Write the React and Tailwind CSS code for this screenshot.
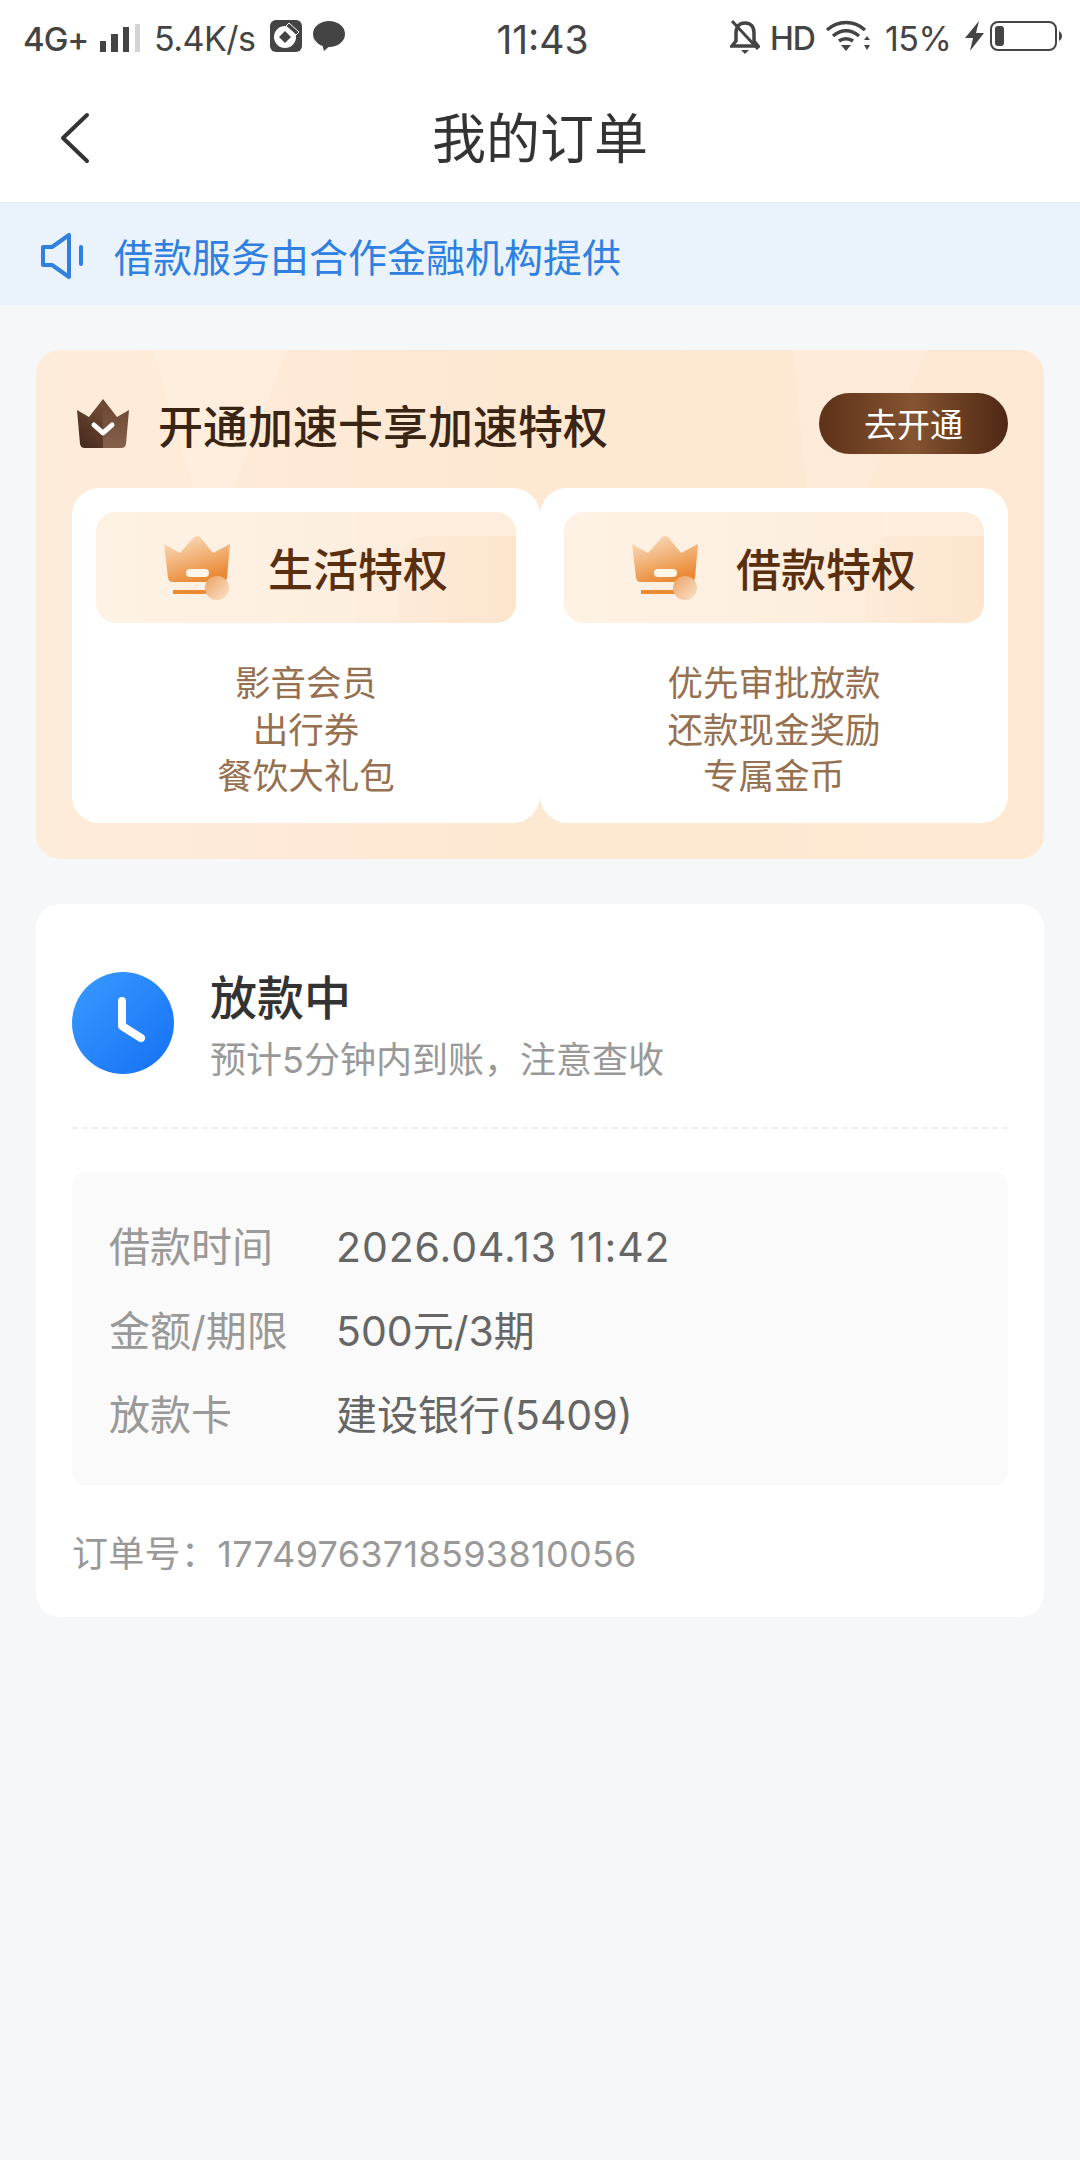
import React from 'react';

const perks = [
  { title: '生活特权', items: ['影音会员', '出行券', '餐饮大礼包'] },
  { title: '借款特权', items: ['优先审批放款', '还款现金奖励', '专属金币'] },
];

const details = [
  { label: '借款时间', value: '2026.04.13 11:42', valueClass: 'tracking-[0.9px]' },
  { label: '金额/期限', value: '500元/3期', valueClass: '' },
  { label: '放款卡', value: '建设银行(5409)', valueClass: '' },
];

const StatusBar = () => (
  <div className="flex h-[72px] items-center bg-white px-[18px] pt-[6px] leading-none text-[#444444]">
    <div className="flex flex-1 items-center pl-[5px]">
      <span className="w-[67px] text-[33px] font-medium tracking-[-1px]">4G+</span>
      <svg width="44" height="30" viewBox="0 0 44 30" className="ml-[8px]">
        <rect x="2" y="17" width="6" height="11" fill="#444" />
        <rect x="13" y="10" width="7" height="18" fill="#444" />
        <rect x="25" y="3" width="6" height="25" fill="#444" />
        <rect x="37" y="0" width="5" height="28" fill="#d4d4d4" />
      </svg>
      <span className="ml-[12px] w-[104px] text-[34px] tracking-[-0.5px]">5.4K/s</span>
      <svg width="32" height="32" viewBox="0 0 32 32" className="ml-[12px] -mt-[6px]">
        <rect width="32" height="32" rx="6" fill="#444" />
        <circle cx="15" cy="17" r="11" fill="#fff" />
        <path d="M15 11l6 6-6 6-6-6z" fill="#444" />
        <path d="M19 3l10 9-3 3-10-9z" fill="#444" stroke="#fff" strokeWidth="1" />
      </svg>
      <svg width="32" height="32" viewBox="0 0 32 32" className="ml-[11px] -mt-[6px]">
        <ellipse cx="16" cy="14" rx="16" ry="13" fill="#444" />
        <path d="M9 24l2 7 7-6z" fill="#444" />
      </svg>
    </div>
    <span className="text-[39px]">11:43</span>
    <div className="flex flex-1 items-center justify-end">
      <svg width="30" height="36" viewBox="0 0 30 36" className="-mt-[4px]">
        <path d="M15 4c-6 0-9 4-9 10v8l-4 5h26l-4-5v-8c0-6-3-10-9-10z" fill="none" stroke="#444" strokeWidth="3.5" />
        <path d="M11 31h8l-4 4z" fill="#444" />
        <path d="M2 2l26 28" stroke="#444" strokeWidth="3" />
      </svg>
      <span className="ml-[10px] w-[44px] text-[32px] font-medium tracking-[-1px]">HD</span>
      <svg width="46" height="32" viewBox="0 0 46 32" className="ml-[11px] -mt-[6px]">
        <path d="M2 10c11-10 27-10 38 0M8 16c8-7 18-7 26 0M14 21c4-3 10-3 14 0" fill="none" stroke="#444" strokeWidth="3.5" />
        <path d="M16 25h10l-5 6z" fill="#444" />
        <path d="M39 20l3-4 3 4zM39 25h6l-3 5z" fill="#444" />
      </svg>
      <span className="ml-[14px] w-[67px] text-[34px] tracking-[-0.5px]">15%</span>
      <svg width="20" height="30" viewBox="0 0 20 30" className="ml-[13px] -mt-[6px]">
        <path d="M14 0L0 17h8l-3 13L19 12h-8z" fill="#444" />
      </svg>
      <svg width="72" height="30" viewBox="0 0 72 30" className="ml-[5px] -mt-[6px]">
        <rect x="1" y="1" width="65" height="28" rx="7" fill="none" stroke="#444" strokeWidth="2" />
        <rect x="5" y="5" width="9" height="20" rx="3" fill="#444" />
        <path d="M69 10c2 1 3 3 3 5s-1 4-3 5z" fill="#444" />
      </svg>
    </div>
  </div>
);

const CrownIcon = ({ id }) => (
  <svg width="66" height="64" viewBox="0 0 66 64" className="shrink-0">
    <defs>
      <linearGradient id={id} x1="0.7" y1="0.9" x2="0.3" y2="0">
        <stop offset="0" stopColor="#ea8a35" />
        <stop offset="1" stopColor="#f8d9b8" />
      </linearGradient>
      <linearGradient id={id + 'c'} x1="0" y1="0" x2="1" y2="1">
        <stop offset="0" stopColor="#eba163" />
        <stop offset="1" stopColor="#fbe3cb" />
      </linearGradient>
    </defs>
    <path d="M0 8l16 9L30 1c2-1 4-1 6 0l13 16L66 8l-3 34c-1 3-2 4-5 4H9c-3 0-4-1-5-4z" fill={`url(#${id})`} />
    <rect x="22" y="33" width="23" height="8" rx="4" fill="#fff5e8" />
    <rect x="9" y="54" width="36" height="4" fill="#ea8a35" />
    <circle cx="53" cy="52" r="12" fill={`url(#${id}c)`} />
  </svg>
);

const PerkCard = ({ perk, index }) => (
  <div className="flex-1 rounded-[27px] bg-white px-[24px] pb-[22px] pt-[24px]">
    <div className="relative flex h-[111px] items-center justify-center overflow-hidden rounded-[20px] bg-gradient-to-r from-[#fef2e5] to-[#fdeddc]">
      <div className="absolute bottom-0 right-0 top-[24px] w-[118px] rounded-tl-[30px] bg-gradient-to-r from-[#fdebd8] to-[#fde5cd]" />
      <div className="absolute bottom-0 left-[260px] top-0 w-[60px] bg-[#fdecd9]/50" />
      <div className="relative flex items-center gap-[38px]">
        <CrownIcon id={`crown${index}`} />
        <span className="mt-[5px] text-[45px] font-medium leading-none text-[#5a2f10]">{perk.title}</span>
      </div>
    </div>
    <div className="mt-[38px] text-center text-[35.5px] leading-[46.5px] text-[#96704f]">
      {perk.items.map((item) => (
        <div key={item}>{item}</div>
      ))}
    </div>
  </div>
);

const App = () => {
  return (
    <div className="h-[2160px] w-[1080px] overflow-hidden bg-[#f6f7f9] font-['Inter','Noto_Sans_CJK_SC',sans-serif]">
      <StatusBar />

      <div className="relative flex h-[131px] items-center justify-center border-b border-[#e6ebf2] bg-white">
        <svg width="32" height="52" viewBox="0 0 32 52" className="absolute left-[59px] top-[40px]">
          <path d="M28 3L4 26l24 23" fill="none" stroke="#333" strokeWidth="4" strokeLinecap="round" strokeLinejoin="round" />
        </svg>
        <span className="mt-[5px] text-[54px] leading-none text-[#333333]">我的订单</span>
      </div>

      <div className="flex h-[102px] items-center bg-[#eaf2fc] pl-[41px]">
        <svg width="42" height="46" viewBox="0 0 42 46" className="mt-[4px] shrink-0">
          <path d="M2 14h9L28 2v42L11 32H2z" fill="none" stroke="#2f80e0" strokeWidth="4" strokeLinejoin="round" />
          <path d="M40 14v17" stroke="#2f80e0" strokeWidth="4" strokeLinecap="round" />
        </svg>
        <span className="ml-[31px] mt-[7px] text-[39px] leading-none text-[#2f80e0]">借款服务由合作金融机构提供</span>
      </div>

      <div className="px-[36px] pt-[45px]">
        <div className="relative overflow-hidden rounded-[24px] bg-gradient-to-r from-[#feecda] via-[#fde8d2] to-[#fee9d4] px-[36px] pb-[36px] pt-[43px]">
          <div className="absolute left-[117px] top-0 h-[140px] w-[134px] bg-[#fff3e6]/40 [clip-path:polygon(0_0,100%_0,60%_100%,30%_100%)]" />
          <div className="absolute right-[117px] top-0 h-[140px] w-[134px] bg-[#fff3e6]/30 [clip-path:polygon(0_0,100%_0,55%_100%,10%_100%)]" />
          <div className="relative flex h-[61px] items-center">
            <svg width="54" height="50" viewBox="0 0 54 50" className="ml-[4px] shrink-0">
              <defs>
                <linearGradient id="darkCrownLeft" x1="0" y1="1" x2="0.6" y2="0">
                  <stop offset="0" stopColor="#43261a" />
                  <stop offset="1" stopColor="#6f4a35" />
                </linearGradient>
                <linearGradient id="darkCrownRight" x1="0" y1="1" x2="0" y2="0">
                  <stop offset="0" stopColor="#85604a" />
                  <stop offset="1" stopColor="#6a4532" />
                </linearGradient>
              </defs>
              <path d="M27 0L13 18 1 11l3 34c1 3 2 4 5 4h18z" fill="url(#darkCrownLeft)" />
              <path d="M27 0l14 18 12-7-3 34c-1 3-2 4-5 4H27z" fill="url(#darkCrownRight)" />
              <path d="M18 26l9 8 9-8" fill="none" stroke="#fff" strokeWidth="5" strokeLinecap="round" strokeLinejoin="round" />
            </svg>
            <span className="ml-[28px] mt-[8px] text-[45px] font-medium leading-none text-[#3a2413]">开通加速卡享加速特权</span>
            <button className="ml-auto h-[61px] w-[189px] rounded-full bg-gradient-to-r from-[#5e3219] via-[#855431] to-[#4f2814] pt-[4px] text-[33px] leading-none text-white">
              去开通
            </button>
          </div>
          <div className="relative mt-[34px] flex">
            {perks.map((perk, i) => (
              <PerkCard key={perk.title} perk={perk} index={i} />
            ))}
          </div>
        </div>

        <div className="mt-[45px] rounded-[24px] bg-white px-[36px] pb-[41px] pt-[64px]">
          <div className="flex items-start gap-[36px]">
            <div className="mt-[4px] flex h-[102px] w-[102px] shrink-0 items-center justify-center rounded-full bg-gradient-to-br from-[#3a9bff] to-[#1370f5]">
              <svg width="102" height="102" viewBox="0 0 102 102">
                <path d="M50 29v25l19 12" fill="none" stroke="#fff" strokeWidth="8" strokeLinecap="round" strokeLinejoin="round" />
              </svg>
            </div>
            <div>
              <div className="text-[47px] font-medium leading-[60px] text-[#333333]">放款中</div>
              <div className="mt-[9px] text-[36px] leading-[46px] text-[#999999]">预计5分钟内到账，注意查收</div>
            </div>
          </div>

          <div className="mt-[44px] border-t-2 border-dashed border-[#eeeeee]" />

          <div className="mt-[43px] flex h-[313px] flex-col justify-center gap-[36px] rounded-[12px] bg-[#fafafa] px-[37px] pt-[6px]">
            {details.map((row) => (
              <div key={row.label} className="flex items-center text-[41px] leading-[48px]">
                <span className="w-[227px] text-[#999999]">{row.label}</span>
                <span className={`text-[#666666] ${row.valueClass}`}>{row.value}</span>
              </div>
            ))}
          </div>

          <div className="mt-[47px] text-[36px] leading-[44px] tracking-[0.3px] text-[#999999]">订单号：17749763718593810056</div>
        </div>
      </div>
    </div>
  );
};

export default App;
